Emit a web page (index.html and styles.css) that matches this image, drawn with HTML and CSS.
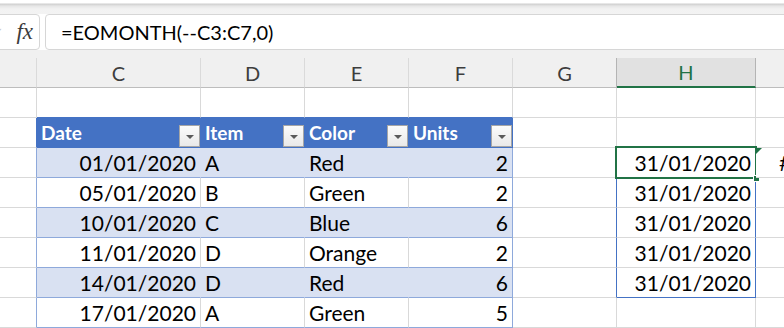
FILE: index.html
```html
<!DOCTYPE html>
<html lang="en">

<head>
    <meta charset="UTF-8">
    <title>EOMONTH spill</title>
    <link rel="stylesheet" href="styles.css">
</head>

<body>
    <div class="excel">
        <!-- Ribbon edge -->
        <div class="ribbon-edge"></div>

        <!-- Formula bar -->
        <div class="formula-bar">
            <div class="name-tools">
                <span class="check">&#10003;</span>
                <span class="fx">fx</span>
            </div>
            <div class="formula">=EOMONTH(--C3:C7,0)</div>
        </div>

        <!-- Sheet -->
        <div class="sheet">
            <div class="col-head"></div>
            <div class="col-head">C</div>
            <div class="col-head">D</div>
            <div class="col-head">E</div>
            <div class="col-head">F</div>
            <div class="col-head before-active">G</div>
            <div class="col-head active-col">H</div>
            <div class="col-head"></div>

            <!-- row 2 -->
            <div class="cell"></div>
            <div class="cell tbl-top"></div>
            <div class="cell tbl-top"></div>
            <div class="cell tbl-top"></div>
            <div class="cell tbl-top"></div>
            <div class="cell"></div>
            <div class="cell"></div>
            <div class="cell"></div>

            <!-- table header -->
            <div class="cell tbl-left-head"></div>
            <div class="cell th">Date<span class="filter"></span></div>
            <div class="cell th">Item<span class="filter"></span></div>
            <div class="cell th">Color<span class="filter"></span></div>
            <div class="cell th last">Units<span class="filter"></span></div>
            <div class="cell"></div>
            <div class="cell"></div>
            <div class="cell"></div>

            <!-- data -->
            <div class="cell tbl-left"></div>
            <div class="cell band num">01/01/2020</div>
            <div class="cell band">A</div>
            <div class="cell band">Red</div>
            <div class="cell band num last">2</div>
            <div class="cell spill-left"></div>
            <div class="cell num spill current">31/01/2020<span class="active"><span class="handle"></span></span></div>
            <div class="cell error">#</div>

            <div class="cell tbl-left"></div>
            <div class="cell plain num">05/01/2020</div>
            <div class="cell plain">B</div>
            <div class="cell plain">Green</div>
            <div class="cell plain num last">2</div>
            <div class="cell spill-left"></div>
            <div class="cell num spill">31/01/2020</div>
            <div class="cell"></div>

            <div class="cell tbl-left"></div>
            <div class="cell band num">10/01/2020</div>
            <div class="cell band">C</div>
            <div class="cell band">Blue</div>
            <div class="cell band num last">6</div>
            <div class="cell spill-left"></div>
            <div class="cell num spill">31/01/2020</div>
            <div class="cell"></div>

            <div class="cell tbl-left"></div>
            <div class="cell plain num">11/01/2020</div>
            <div class="cell plain">D</div>
            <div class="cell plain">Orange</div>
            <div class="cell plain num last">2</div>
            <div class="cell spill-left"></div>
            <div class="cell num spill">31/01/2020</div>
            <div class="cell"></div>

            <div class="cell tbl-left"></div>
            <div class="cell band num">14/01/2020</div>
            <div class="cell band">D</div>
            <div class="cell band">Red</div>
            <div class="cell band num last">6</div>
            <div class="cell spill-left"></div>
            <div class="cell num spill spill-end">31/01/2020</div>
            <div class="cell"></div>

            <div class="cell tbl-left"></div>
            <div class="cell plain num">17/01/2020</div>
            <div class="cell plain">A</div>
            <div class="cell plain">Green</div>
            <div class="cell plain num last">5</div>
            <div class="cell"></div>
            <div class="cell"></div>
            <div class="cell"></div>
        </div>
    </div>
</body>

</html>
```

FILE: styles.css
```css
html,
body {
    margin: 0;
    overflow: hidden;
}

body {
    font-family: Lato, "Noto Sans", sans-serif;
    background: #fff;
    width: 784px;
    height: 328px;
}

.ribbon-edge {
    height: 14px;
    background: linear-gradient(to bottom, #fff 0, #fff 3px, #cfcfcf 4px, #e6e6e6 6px, #f2f2f2 9px, #f3f3f3 14px);
}

.formula-bar {
    display: flex;
    height: 36px;
    background: #fff;
}

.name-tools {
    box-sizing: border-box;
    flex: 0 0 80px;
    margin-left: -40px;
    border: 1px solid #d6d6d6;
    border-radius: 4px;
    display: flex;
    align-items: center;
    justify-content: flex-end;
    padding-right: 6px;
}

.check {
    margin-right: 13px;
    font-family: "DejaVu Sans", sans-serif;
    font-size: 13px;
    color: #c4c4c4;
}

.fx {
    font-family: "Liberation Serif", serif;
    font-style: italic;
    font-size: 23px;
    color: #3c3c3c;
}

.formula {
    flex: 1;
    margin-left: 5px;
    margin-right: -10px;
    border: 1px solid #d6d6d6;
    border-radius: 4px;
    display: flex;
    align-items: center;
    padding-left: 15px;
    font-size: 20px;
    color: #000;
}

.sheet {
    display: grid;
    grid-template-columns: 37px 164px 104px 104px 104px 104px 139px 1fr;
    grid-auto-rows: 30px;
    padding-top: 8px;
    background: #f0f0f0;
}

.col-head {
    box-sizing: border-box;
    display: flex;
    align-items: center;
    justify-content: center;
    background: #f0f0f0;
    border-right: 1px solid #dadada;
    border-bottom: 1px solid #bdbdbd;
    font-size: 20px;
    color: #3d3d3d;
}

.col-head.before-active {
    border-right-color: #b4b4b4;
}

.col-head.active-col {
    background: #e1e1e1;
    color: #217346;
    border-right-color: #b4b4b4;
    border-bottom: 2px solid #217346;
}

.cell {
    box-sizing: border-box;
    display: flex;
    align-items: center;
    padding: 0 4px;
    background: #fff;
    border-right: 1px solid #d9d9d9;
    border-bottom: 1px solid #d9d9d9;
    font-size: 21px;
    color: #000;
    white-space: nowrap;
}

.num {
    justify-content: flex-end;
}

/* Table */
.tbl-top {
    border-bottom-color: #4472c4;
}

.tbl-left-head {
    border-right-color: #4472c4;
}

.tbl-left {
    border-right-color: #8ea9db;
}

.th {
    background: #4472c4;
    color: #fff;
    font-weight: bold;
    font-size: 19px;
    justify-content: space-between;
    padding-right: 0;
    border-right-color: #4472c4;
    border-bottom-color: #4472c4;
}

.filter {
    box-sizing: border-box;
    align-self: flex-end;
    width: 21px;
    height: 22px;
    background: linear-gradient(to bottom, #fbfbfb, #e9e9e9);
    border: 1px solid #a6a6a6;
    display: flex;
    align-items: center;
    justify-content: center;
}

.filter::after {
    content: "";
    margin-top: 2px;
    border-left: 4px solid transparent;
    border-right: 4px solid transparent;
    border-top: 4px solid #5a5a5a;
}

.band {
    background: #d9e1f2;
    border-right-color: #d9e1f2;
    border-bottom-color: #8ea9db;
}

.plain {
    border-bottom-color: #8ea9db;
}

.cell.last {
    border-right-color: #8ea9db;
}

.th.last {
    border-right-color: #4472c4;
}

/* Spill range */
.spill-left,
.spill {
    border-right-color: #4472c4;
}

.spill-end {
    border-bottom-color: #4472c4;
}

/* Active cell */
.current {
    position: relative;
}

.active {
    position: absolute;
    top: -2px;
    left: -2px;
    right: -2px;
    bottom: -2px;
    border: 2px solid #217346;
    pointer-events: none;
}

.handle {
    position: absolute;
    right: -5px;
    bottom: -5px;
    width: 5px;
    height: 5px;
    background: #217346;
    border: 1px solid #fff;
}

/* Error indicator */
.error {
    position: relative;
    padding-left: 23px;
}

.error::before {
    content: "";
    position: absolute;
    top: 0;
    left: 0;
    border-top: 6px solid #1e7145;
    border-right: 6px solid transparent;
}
```
